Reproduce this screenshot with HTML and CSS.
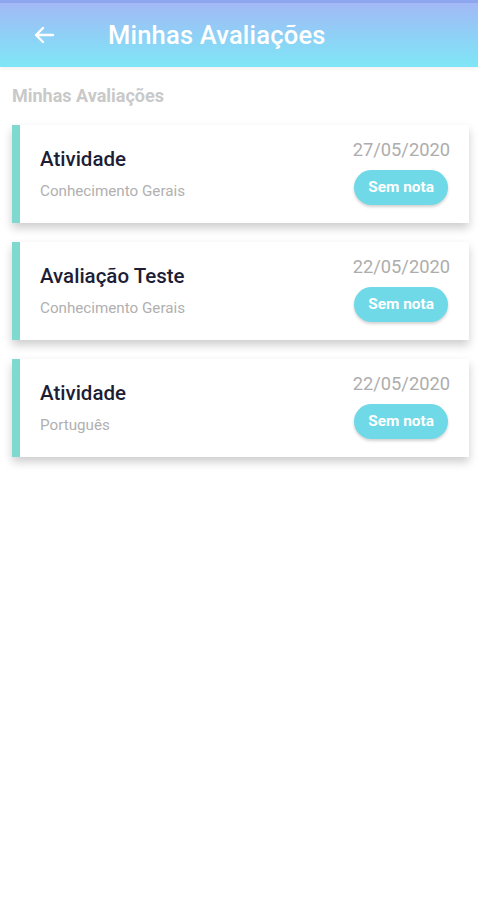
FILE: index.html
```html
<!DOCTYPE html>
<html lang="pt-BR">
<head>
  <meta charset="UTF-8" />
  <meta name="viewport" content="width=device-width, initial-scale=1.0"/>
  <title>Minhas Avaliações</title>
  <link rel="stylesheet" href="styles.css">
</head>
<body>

  <div class="navbar">
    <div class="back">
      <svg width="22" height="18" viewBox="0 0 22 18">
        <path d="M20 9H3M10 2L3 9l7 7" fill="none" stroke="white" stroke-width="2.4" stroke-linecap="round" stroke-linejoin="round"/>
      </svg>
    </div>
    <h1>Minhas Avaliações</h1>
  </div>

  <div class="container">
    <h2>Minhas Avaliações</h2>

    <div class="card">
      <div class="card-info">
        <div class="card-title">Atividade</div>
        <div class="card-sub">Conhecimento Gerais</div>
      </div>
      <div class="card-side">
        <div class="card-date">27/05/2020</div>
        <div class="badge">Sem nota</div>
      </div>
    </div>

    <div class="card">
      <div class="card-info">
        <div class="card-title">Avaliação Teste</div>
        <div class="card-sub">Conhecimento Gerais</div>
      </div>
      <div class="card-side">
        <div class="card-date">22/05/2020</div>
        <div class="badge">Sem nota</div>
      </div>
    </div>

    <div class="card">
      <div class="card-info">
        <div class="card-title">Atividade</div>
        <div class="card-sub">Português</div>
      </div>
      <div class="card-side">
        <div class="card-date">22/05/2020</div>
        <div class="badge">Sem nota</div>
      </div>
    </div>
  </div>

</body>
</html>
```

FILE: styles.css
```css
* {
  margin: 0;
  padding: 0;
  box-sizing: border-box;
  font-family: 'Roboto', 'Noto Sans', sans-serif;
}

body {
  background: #ffffff;
  min-height: 100vh;
}

.navbar {
  height: 67px;
  background: linear-gradient(180deg, #a3b9f6 0%, #8fd0f6 50%, #7fe6f6 100%);
  border-top: 3px solid #8ea6ee;
  display: flex;
  align-items: center;
  padding: 0 0 0 33px;
  box-shadow: 0 2px 4px rgba(0, 0, 0, 0.06);
}

.back {
  display: flex;
  align-items: center;
  width: 75px;
}

.navbar h1 {
  font-size: 25.5px;
  font-weight: 500;
  color: white;
  letter-spacing: 0.2px;
}

.container {
  padding: 18px 9px 0 12px;
}

h2 {
  font-size: 18px;
  line-height: 22px;
  font-weight: 700;
  color: #c9c9c9;
  margin-bottom: 18px;
}

.card {
  display: flex;
  justify-content: space-between;
  height: 98px;
  background: white;
  border-left: 8px solid #80d9cf;
  margin-bottom: 19px;
  padding: 14px 19px 0 20px;
  box-shadow: 0 5px 9px rgba(0, 0, 0, 0.2);
}

.card-info {
  padding-top: 8px;
}

.card-title {
  font-size: 20.5px;
  line-height: 24px;
  font-weight: 500;
  color: #1d1d35;
}

.card-sub {
  font-size: 15.2px;
  line-height: 18px;
  color: #b0b0b0;
  margin-top: 11px;
}

.card-side {
  display: flex;
  flex-direction: column;
  align-items: flex-end;
}

.card-date {
  font-size: 18.3px;
  line-height: 22px;
  color: #adadad;
}

.badge {
  margin-top: 9px;
  margin-right: 2px;
  background: #6fd9e7;
  color: white;
  font-size: 15.4px;
  line-height: 19px;
  font-weight: 700;
  padding: 8px 14px;
  border-radius: 18px;
  box-shadow: 0 2px 3px rgba(0, 0, 0, 0.18);
}
```
